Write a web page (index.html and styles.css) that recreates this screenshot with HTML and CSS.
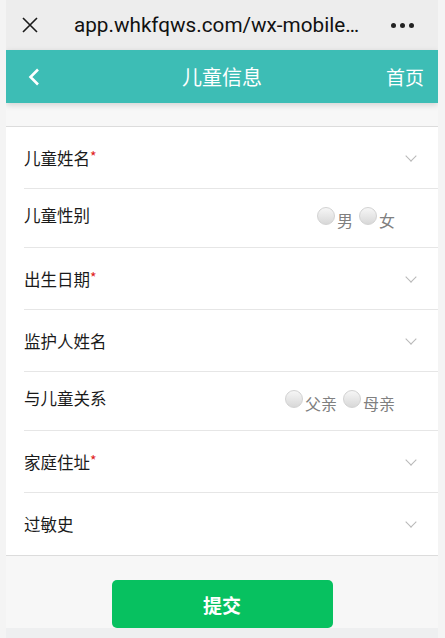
FILE: index.html
```html
<!DOCTYPE html>
<html lang="zh-CN">
<head>
  <meta charset="UTF-8">
  <meta name="viewport" content="width=device-width, initial-scale=1.0">
  <title>儿童信息</title>
  <link rel="stylesheet" href="styles.css">
</head>
<body>
  <div class="frame">
    <div class="browser-bar">
      <svg class="close-icon" width="16" height="16" viewBox="0 0 16 16">
        <path d="M1 1 L15 15 M15 1 L1 15" stroke="#1a1a1a" stroke-width="1.6" fill="none"/>
      </svg>
      <span class="url">app.whkfqws.com/wx-mobile…</span>
      <span class="more"><i></i><i></i><i></i></span>
    </div>

    <div class="header">
      <svg class="back" width="12" height="18" viewBox="0 0 12 18">
        <path d="M10 1.5 L2.5 9 L10 16.5" stroke="#fff" stroke-width="2.6" fill="none"/>
      </svg>
      <h1>儿童信息</h1>
      <a class="home">首页</a>
    </div>

    <div class="form-list">
      <div class="row">
        <span class="label">儿童姓名<em>*</em></span>
        <span class="arrow"></span>
      </div>
      <div class="row row-radio">
        <span class="label">儿童性别</span>
        <span class="radios">
          <label><i class="dot"></i>男</label>
          <label><i class="dot"></i>女</label>
        </span>
      </div>
      <div class="row">
        <span class="label">出生日期<em>*</em></span>
        <span class="arrow"></span>
      </div>
      <div class="row">
        <span class="label">监护人姓名</span>
        <span class="arrow"></span>
      </div>
      <div class="row row-radio">
        <span class="label">与儿童关系</span>
        <span class="radios">
          <label><i class="dot"></i>父亲</label>
          <label><i class="dot"></i>母亲</label>
        </span>
      </div>
      <div class="row">
        <span class="label">家庭住址<em>*</em></span>
        <span class="arrow"></span>
      </div>
      <div class="row">
        <span class="label">过敏史</span>
        <span class="arrow"></span>
      </div>
    </div>

    <div class="actions">
      <button class="submit">提交</button>
    </div>
    <div class="bottom-strip"></div>
  </div>
</body>
</html>
```

FILE: styles.css
```css
body {
  margin: 0;
  background: #f4f4f4;
  font-family: "Noto Sans CJK SC", "Noto Sans", sans-serif;
}

.frame {
  width: 432px;
  height: 638px;
  margin-left: 6px;
  background: #f7f7f7;
  display: flex;
  flex-direction: column;
  overflow: hidden;
}

.browser-bar {
  height: 50px;
  flex-shrink: 0;
  background: #ededed;
  display: flex;
  align-items: center;
  padding-left: 16px;
  padding-right: 24px;
}

.url {
  margin-left: 36px;
  font-family: Roboto, "Noto Sans", sans-serif;
  font-size: 20.7px;
  color: #111;
  flex: 1;
}

.more {
  display: flex;
  gap: 4px;
}

.more i {
  width: 5px;
  height: 5px;
  border-radius: 50%;
  background: #222;
}

.header {
  height: 53px;
  flex-shrink: 0;
  background: #3dbdb5;
  box-shadow: 0 2px 6px rgba(0, 0, 0, 0.15);
  display: flex;
  align-items: center;
  padding: 0 14px 0 22px;
  position: relative;
  z-index: 1;
}

.header h1 {
  flex: 1;
  margin: 0 0 0 -12px;
  text-align: center;
  font-size: 20px;
  font-weight: normal;
  color: #fff;
  position: relative;
  left: -4px;
}

.home {
  color: #fff;
  font-size: 19px;
  margin-left: -38px;
}

.form-list {
  margin-top: 23px;
  background: #fff;
  border-top: 1px solid #dcdcdc;
  border-bottom: 1px solid #dcdcdc;
  padding-left: 18px;
}

.row {
  height: 61px;
  display: flex;
  align-items: center;
  justify-content: space-between;
  border-bottom: 1px solid #e6e6e6;
  padding-right: 21px;
}

.row:last-child {
  border-bottom: none;
  height: 62px;
}

.row-radio {
  height: 58px;
  padding-right: 43px;
}

.label {
  font-size: 16.5px;
  color: #1a1a1a;
}

.row-radio .label {
  margin-top: -6px;
}

.label em {
  color: #e02020;
  font-style: normal;
  font-size: 14px;
  vertical-align: 3px;
}

.arrow {
  width: 7px;
  height: 7px;
  border-right: 1px solid #b8b8b8;
  border-bottom: 1px solid #b8b8b8;
  transform: rotate(45deg);
  margin-top: -4px;
  margin-right: 2px;
}

.radios {
  display: flex;
  gap: 6px;
  font-size: 16px;
  color: #808080;
  margin-top: 4px;
}

.radios label {
  display: flex;
  align-items: center;
}

.dot {
  flex-shrink: 0;
  width: 18px;
  height: 18px;
  margin-right: 2px;
  border-radius: 50%;
  border: 1px solid #d2d2d2;
  background: linear-gradient(#f6f6f6, #d8d8d8);
  box-sizing: border-box;
  transform: translateY(-4px);
}

.actions {
  flex: 1;
  display: flex;
  justify-content: center;
  align-items: flex-end;
}

.submit {
  width: 221px;
  height: 48px;
  border: none;
  border-radius: 5px;
  background: #07c160;
  color: #fff;
  font-family: "Noto Sans CJK SC", sans-serif;
  font-size: 19px;
  font-weight: bold;
}

.bottom-strip {
  height: 10px;
  flex-shrink: 0;
  background: #eeeff0;
}
```
